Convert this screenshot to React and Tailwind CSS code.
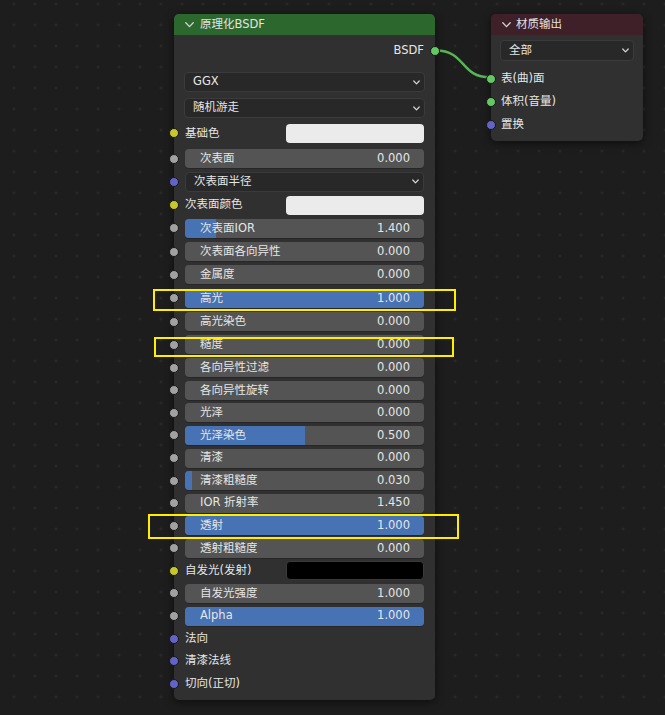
import React from "react";

const SOCKET = {
  yellow: "bg-[#c7c729]",
  gray: "bg-[#a1a1a1]",
  purple: "bg-[#6363c7]",
  green: "bg-[#63c763]",
};

function Socket({ color, side = "left" }) {
  return (
    <div
      className={`absolute top-1/2 -translate-y-1/2 h-[10px] w-[10px] rounded-full border border-[#161616] ${SOCKET[color]} ${
        side === "left" ? "left-[-5px]" : "right-[-5px]"
      }`}
    />
  );
}

function Chevron({ className = "" }) {
  return (
    <svg width="9" height="6" viewBox="0 0 9 6" className={className}>
      <path d="M0.8 0.8 L4.5 4.6 L8.2 0.8" fill="none" stroke="#d4d4d4" strokeWidth="1.3" strokeLinecap="round" strokeLinejoin="round" />
    </svg>
  );
}

function SmallChevron() {
  return (
    <svg width="7" height="5" viewBox="0 0 7 5">
      <path d="M0.8 1 L3.5 3.8 L6.2 1" fill="none" stroke="#d8d8d8" strokeWidth="1.2" strokeLinecap="round" strokeLinejoin="round" />
    </svg>
  );
}

function Dropdown({ label, h = "h-[20px]", pl = "pl-[8px]" }) {
  return (
    <div className={`flex ${h} items-center justify-between rounded-[4px] border border-[#3b3b3b] bg-[#282828] ${pl} pr-[4px] text-[#e6e6e6]`}>
      <span>{label}</span>
      <SmallChevron />
    </div>
  );
}

function Slider({ label, value, fill }) {
  return (
    <div className="relative h-[19px] flex-1 overflow-hidden rounded-[4px] bg-[#545454] shadow-[0_1px_0_#262626]">
      {fill > 0 && <div className="absolute inset-y-0 left-0 bg-[#4772b3]" style={{ width: `${fill}%` }} />}
      <div className="relative flex h-full items-center justify-between pl-[15px] pr-[14px] text-[#e6e6e6]">
        <span>{label}</span>
        <span>{value}</span>
      </div>
    </div>
  );
}

const rows = [
  { t: "color", label: "基础色", s: "yellow", c: "bg-[#ebebeb]" },
  { t: "slider", label: "次表面", v: "0.000", f: 0 },
  { t: "select", label: "次表面半径", s: "purple" },
  { t: "color", label: "次表面颜色", s: "yellow", c: "bg-[#ebebeb]" },
  { t: "slider", label: "次表面IOR", v: "1.400", f: 13 },
  { t: "slider", label: "次表面各向异性", v: "0.000", f: 0 },
  { t: "slider", label: "金属度", v: "0.000", f: 0 },
  { t: "slider", label: "高光", v: "1.000", f: 100 },
  { t: "slider", label: "高光染色", v: "0.000", f: 0 },
  { t: "slider", label: "糙度", v: "0.000", f: 0 },
  { t: "slider", label: "各向异性过滤", v: "0.000", f: 0 },
  { t: "slider", label: "各向异性旋转", v: "0.000", f: 0 },
  { t: "slider", label: "光泽", v: "0.000", f: 0 },
  { t: "slider", label: "光泽染色", v: "0.500", f: 50 },
  { t: "slider", label: "清漆", v: "0.000", f: 0 },
  { t: "slider", label: "清漆粗糙度", v: "0.030", f: 3 },
  { t: "slider", label: "IOR 折射率", v: "1.450", f: 0 },
  { t: "slider", label: "透射", v: "1.000", f: 100 },
  { t: "slider", label: "透射粗糙度", v: "0.000", f: 0 },
  { t: "color", label: "自发光(发射)", s: "yellow", c: "bg-[#000000] border border-[#3a3a3a]" },
  { t: "slider", label: "自发光强度", v: "1.000", f: 0 },
  { t: "slider", label: "Alpha", v: "1.000", f: 100 },
  { t: "label", label: "法向", s: "purple" },
  { t: "label", label: "清漆法线", s: "purple" },
  { t: "label", label: "切向(正切)", s: "purple" },
];

function Row({ r, i }) {
  const sock = r.s || "gray";
  const hc = i === 0 ? "h-[22.85px] mb-[2.2px]" : i <= 9 ? "h-[23.27px]" : "h-[22.59px]";
  return (
    <div className={`relative flex items-center px-[11px] ${hc}`}>
      <Socket color={sock} />
      {r.t === "slider" && <Slider label={r.label} value={r.v} fill={r.f} />}
      {r.t === "select" && (
        <div className="flex-1">
          <Dropdown label={r.label} />
        </div>
      )}
      {r.t === "color" && (
        <div className="flex flex-1 items-center justify-between text-[#e6e6e6]">
          <span>{r.label}</span>
          <div className={`h-[19px] w-[138px] rounded-[4px] ${r.c}`} />
        </div>
      )}
      {r.t === "label" && <span className="text-[#e6e6e6]">{r.label}</span>}
    </div>
  );
}

export default function App() {
  return (
    <div className="relative h-[715px] w-[665px] overflow-hidden bg-[#1d1d1d] bg-[radial-gradient(circle,#2a2a2a_1px,transparent_1.6px)] bg-[size:21px_21px] bg-[position:3.5px_-6.5px] font-['DejaVu_Sans','Noto_Sans_CJK_SC',sans-serif] text-[11.5px] leading-none">
      {/* link */}
      <svg className="absolute left-0 top-0" width="665" height="715">
        <path d="M436 50.5 C 466 50.5, 460 77.3, 490 77.3" fill="none" stroke="#56b656" strokeWidth="2.4" />
      </svg>

      {/* Principled BSDF node */}
      <div className="absolute left-[174px] top-[14px] flex w-[261px] flex-col rounded-[5px] bg-[#303030] pb-[4.5px] shadow-[0_2px_8px_rgba(0,0,0,0.55)]">
        <div className="flex h-[21px] items-center gap-[6px] rounded-t-[5px] bg-[#2c682d] pl-[11px] text-[#e2e2e2]">
          <Chevron />
          <span>原理化BSDF</span>
        </div>
        <div className="relative mt-[5.5px] flex h-[21px] items-center justify-end pr-[11px] text-[#e6e6e6]">
          <span>BSDF</span>
          <Socket color="green" side="right" />
        </div>
        <div className="mt-[10.5px] px-[10px]">
          <Dropdown label="GGX" />
        </div>
        <div className="mt-[6px] px-[10px]">
          <Dropdown label="随机游走" />
        </div>
        <div className="mt-[4px] flex flex-col">
          {rows.map((r, i) => (
            <Row key={i} r={r} i={i} />
          ))}
        </div>
      </div>

      {/* Material output node */}
      <div className="absolute left-[491px] top-[14px] flex w-[152px] flex-col rounded-[5px] bg-[#303030] pb-[4px] shadow-[0_2px_8px_rgba(0,0,0,0.55)]">
        <div className="flex h-[21px] items-center gap-[5px] rounded-t-[5px] bg-[#3f2029] pl-[11px] text-[#e2e2e2]">
          <Chevron />
          <span>材质输出</span>
        </div>
        <div className="mt-[5px] px-[9px]">
          <Dropdown label="全部" h="h-[21px]" pl="pl-[8px]" />
        </div>
        <div className="mt-[6px] flex flex-col text-[#e6e6e6]">
          <div className="relative flex h-[23.3px] items-center pl-[10px]">
            <Socket color="green" />
            <span>表(曲)面</span>
          </div>
          <div className="relative flex h-[23.3px] items-center pl-[10px]">
            <Socket color="green" />
            <span>体积(音量)</span>
          </div>
          <div className="relative flex h-[23.3px] items-center pl-[10px]">
            <Socket color="purple" />
            <span>置换</span>
          </div>
        </div>
      </div>

      {/* yellow highlight boxes */}
      <div className="absolute left-[153px] top-[289px] h-[21.5px] w-[303px] border-2 border-[#ffee00]" />
      <div className="absolute left-[154px] top-[336.5px] h-[20px] w-[300px] border-2 border-[#ffee00]" />
      <div className="absolute left-[148px] top-[514px] h-[25px] w-[311px] border-2 border-[#ffee00]" />
    </div>
  );
}
